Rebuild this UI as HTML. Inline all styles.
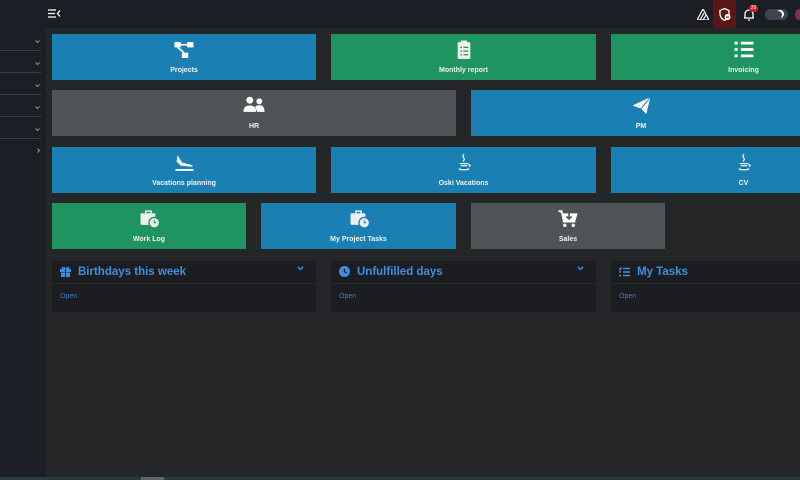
<!DOCTYPE html>
<html><head><meta charset="utf-8"><style>
*{margin:0;padding:0;box-sizing:border-box}
body{width:800px;height:480px;overflow:hidden;background:#252628;font-family:"Liberation Sans",sans-serif;position:relative}
.side{position:absolute;left:0;top:0;width:46px;height:477px;background:#1b1f25}
.top{position:absolute;left:0;top:0;width:800px;height:28px;background:#1b1f25}
.sep{position:absolute;left:0;width:41px;height:1px;background:#3a3e45}
.chev{position:absolute;left:35px}
.t{position:absolute;height:46px;color:#f2f2f2;font-size:7px;font-weight:bold;text-align:center}
.t svg{display:block;margin:6px auto 0;width:24px;height:19px}
.t span{display:block;margin-top:8px}
.b{background:#1a80b3}.g{background:#1f9461}.y{background:#4f5457}
.card{position:absolute;top:261px;height:51px;background:#1c1d20}
.card .h{height:23px;border-bottom:1px solid #2a2b2e;color:#3d8fe0;font-size:11.5px;font-weight:bold;padding:5px 0 0 8px;position:relative}
.card .h svg{vertical-align:-2px;margin-right:7px}
.card .o{color:#3d7fd0;font-size:7px;padding:9px 0 0 8px}
.card .c{position:absolute;right:5px;top:5px}
</style></head><body>
<div class="side"></div>
<div class="top"></div>
<svg style="position:absolute;left:48px;top:9px" width="13" height="9"><path d="M0 1H8M0 4.5H7M0 8H8M12 1.5L9.5 4.5L12 7.5" stroke="#fff" stroke-width="1.3" fill="none"/></svg>
<div class="sep" style="top:50px"></div><div class="sep" style="top:72px"></div><div class="sep" style="top:94px"></div><div class="sep" style="top:116px"></div><div class="sep" style="top:138px"></div>
<svg class="chev" style="top:40px" width="5" height="4"><path d="M0.5 0.5L2.5 2.5L4.5 0.5" stroke="#8a9099" fill="none"/></svg>
<svg class="chev" style="top:62px" width="5" height="4"><path d="M0.5 0.5L2.5 2.5L4.5 0.5" stroke="#8a9099" fill="none"/></svg>
<svg class="chev" style="top:84px" width="5" height="4"><path d="M0.5 0.5L2.5 2.5L4.5 0.5" stroke="#8a9099" fill="none"/></svg>
<svg class="chev" style="top:106px" width="5" height="4"><path d="M0.5 0.5L2.5 2.5L4.5 0.5" stroke="#8a9099" fill="none"/></svg>
<svg class="chev" style="top:128px" width="5" height="4"><path d="M0.5 0.5L2.5 2.5L4.5 0.5" stroke="#8a9099" fill="none"/></svg>
<svg class="chev" style="top:148px;left:37px" width="4" height="5"><path d="M0.5 0.5L2.5 2.5L0.5 4.5" stroke="#8a9099" fill="none"/></svg>
<!-- top right -->
<svg style="position:absolute;left:697px;top:9px" width="12" height="11"><path d="M6 0L12 11H0Z M3 11L7 4 M6 11L9 6" stroke="#fff" stroke-width="1.2" fill="none"/></svg>
<div style="position:absolute;left:713px;top:0;width:23px;height:28px;background:#5b1517"></div>
<svg style="position:absolute;left:719px;top:8px" width="12" height="13"><path d="M5.5 0.5L10 2.5V6C10 9 8 11 5.5 12.5C3 11 1 9 1 6V2.5Z" stroke="#fff" stroke-width="1.3" fill="none"/><circle cx="8.5" cy="9" r="3" fill="#fff"/><path d="M7 9H10" stroke="#5b1517"/></svg>
<svg style="position:absolute;left:743px;top:8px" width="12" height="13"><path d="M2 10V6A4 4 0 0 1 10 6V10H11H1Z M5 12H7" stroke="#fff" stroke-width="1.3" fill="none"/></svg>
<div style="position:absolute;left:749px;top:5px;width:9px;height:7px;border-radius:4px;background:#d11f2a;color:#fff;font-size:5px;text-align:center;line-height:7px">29</div>
<div style="position:absolute;left:765px;top:9px;width:23px;height:11px;border-radius:6px;background:#3c4650"></div>
<div style="position:absolute;left:776px;top:10px;width:8px;height:8px;border-radius:50%;box-shadow:-2px 1px 0 0 #fff inset"></div>
<div style="position:absolute;left:795px;top:9px;width:8px;height:11px;border-radius:50%;background:#7c3550"></div>
<!-- row1 -->
<div class="t b" style="left:52px;top:34px;width:264px"><svg viewBox="0 0 22 18"><rect x="2" y="2" width="6" height="5" fill="#fff"/><rect x="14" y="2" width="6" height="5" fill="#fff"/><rect x="9" y="12" width="6" height="5" fill="#fff"/><path d="M8 4.5H14M5 7L11 12" stroke="#fff" stroke-width="1.5"/></svg><span>Projects</span></div>
<div class="t g" style="left:331px;top:34px;width:265px"><svg viewBox="0 0 22 18"><rect x="5" y="2" width="12" height="16" rx="1.5" fill="#eee"/><rect x="8" y="0.5" width="6" height="3" fill="#eee"/><path d="M7.5 7H9M10.5 7H15M7.5 10.5H9M10.5 10.5H15M7.5 14H9M10.5 14H15" stroke="#1f9461" stroke-width="1.2"/></svg><span>Monthly report</span></div>
<div class="t g" style="left:611px;top:34px;width:265px"><svg viewBox="0 0 22 18"><path d="M2 3H5M8 3H20M2 9H5M8 9H20M2 15H5M8 15H20" stroke="#fff" stroke-width="2.6"/></svg><span>Invoicing</span></div>
<!-- row2 -->
<div class="t y" style="left:52px;top:90px;width:404px"><svg viewBox="0 0 22 18"><circle cx="7" cy="4" r="3.3" fill="#fff"/><circle cx="16" cy="5" r="2.8" fill="#fff"/><path d="M1 15Q1 9 7 9Q13 9 13 15Z M12 10Q15 8 18 9Q21 10 21 15H14Z" fill="#fff"/></svg><span>HR</span></div>
<div class="t b" style="left:471px;top:90px;width:340px"><svg viewBox="0 0 22 18"><path d="M3 9L20 1L16 17L11 12Z" fill="#fff"/><path d="M11 12L20 1" stroke="#1a80b3" stroke-width="1"/></svg><span>PM</span></div>
<!-- row3 -->
<div class="t b" style="left:52px;top:147px;width:264px"><svg viewBox="0 0 22 18"><path d="M5 2L9 9L17 11Q20 12 19 13L8 12L4 8Z" fill="#fff"/><path d="M3 16H20" stroke="#fff" stroke-width="1.8"/></svg><span>Vacations planning</span></div>
<div class="t b" style="left:331px;top:147px;width:265px"><svg viewBox="0 0 22 18"><path d="M11 1Q9 3 11 5Q12 6 10 8M7 10H15M8 12H14M6 15Q11 17 16 15M15 11Q18 11 16 13" stroke="#fff" stroke-width="1.1" fill="none"/></svg><span>Oski Vacations</span></div>
<div class="t b" style="left:611px;top:147px;width:265px"><svg viewBox="0 0 22 18"><path d="M11 1Q9 3 11 5Q12 6 10 8M7 10H15M8 12H14M6 15Q11 17 16 15M15 11Q18 11 16 13" stroke="#fff" stroke-width="1.1" fill="none"/></svg><span>CV</span></div>
<!-- row4 -->
<div class="t g" style="left:52px;top:203px;width:194px"><svg viewBox="0 0 22 18"><path d="M8 4V2H13V4" stroke="#eee" stroke-width="1.5" fill="none"/><rect x="3" y="4" width="14" height="11" rx="1" fill="#eee"/><circle cx="16" cy="13" r="5" fill="#eee" stroke="#1f9461" stroke-width="1.2"/><path d="M16 10.5V13H18" stroke="#1f9461" stroke-width="1" fill="none"/></svg><span>Work Log</span></div>
<div class="t b" style="left:261px;top:203px;width:195px"><svg viewBox="0 0 22 18"><path d="M8 4V2H13V4" stroke="#eee" stroke-width="1.5" fill="none"/><rect x="3" y="4" width="14" height="11" rx="1" fill="#eee"/><circle cx="16" cy="13" r="5" fill="#eee" stroke="#1a80b3" stroke-width="1.2"/><path d="M16 10.5V13H18" stroke="#1a80b3" stroke-width="1" fill="none"/></svg><span>My Project Tasks</span></div>
<div class="t y" style="left:471px;top:203px;width:194px"><svg viewBox="0 0 22 18"><path d="M2 2H5L7 12H17L19 5H6" stroke="#fff" stroke-width="1.6" fill="#fff"/><path d="M12 3V9M9.5 7L12 9.5L14.5 7" stroke="#4f5457" stroke-width="1.5" fill="none"/><circle cx="8" cy="15.5" r="1.6" fill="#fff"/><circle cx="16" cy="15.5" r="1.6" fill="#fff"/></svg><span>Sales</span></div>
<!-- cards -->
<div class="card" style="left:52px;width:264px"><div class="h"><svg width="11" height="11" viewBox="0 0 11 11"><rect x="0" y="3" width="11" height="3" fill="#3d8fe0"/><rect x="1" y="6.5" width="9" height="4.5" fill="#3d8fe0"/><path d="M5.5 3Q3 0 2 2Q2 3 5.5 3Q9 3 9 2Q8 0 5.5 3" stroke="#3d8fe0" fill="none"/><path d="M5.5 3V11" stroke="#1c1d20"/></svg>Birthdays this week<svg class="c" width="7" height="5"><path d="M0.8 0.8L3.5 3.5L6.2 0.8" stroke="#3d8fe0" stroke-width="1.5" fill="none"/></svg></div><div class="o">Open</div></div>
<div class="card" style="left:331px;width:265px"><div class="h"><svg width="11" height="11" viewBox="0 0 11 11"><circle cx="5.5" cy="5.5" r="5.5" fill="#3d8fe0"/><path d="M5.5 2.5V5.5L7.5 7" stroke="#1c1d20" stroke-width="1.3" fill="none"/></svg>Unfulfilled days<svg class="c" width="7" height="5"><path d="M0.8 0.8L3.5 3.5L6.2 0.8" stroke="#3d8fe0" stroke-width="1.5" fill="none"/></svg></div><div class="o">Open</div></div>
<div class="card" style="left:611px;width:265px"><div class="h"><svg width="11" height="10" viewBox="0 0 11 10"><path d="M0 1.5L1 2.5L2.5 0.5M0 5H2M0 8.5H2M4 1.5H11M4 5H11M4 8.5H11" stroke="#3d8fe0" stroke-width="1.4" fill="none"/></svg>My Tasks</div><div class="o">Open</div></div>
<div style="position:absolute;left:0;top:477px;width:800px;height:3px;background:#2a3a42"></div>
<div style="position:absolute;left:141px;top:477px;width:23px;height:3px;background:#5a656c"></div>
</body></html>
